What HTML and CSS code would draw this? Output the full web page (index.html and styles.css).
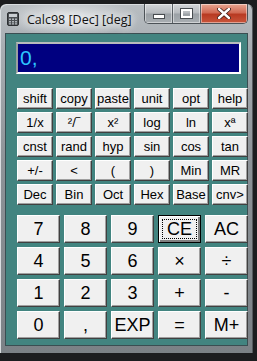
FILE: index.html
```html
<!DOCTYPE html>
<html lang="en">
<head>
  <meta charset="UTF-8">
  <title>Calc98</title>
  <link rel="stylesheet" href="styles.css">
</head>
<body>

<div class="window">
  <div class="titlebar">
    <svg class="app-icon" width="12" height="14" viewBox="0 0 12 14">
      <rect x="0.5" y="0.5" width="11" height="13" rx="1.5" fill="#4b4f53" stroke="#2c2f32"/>
      <rect x="2" y="2" width="8" height="3" fill="#c9ced2"/>
      <g fill="#aeb3b8">
        <rect x="2" y="6.5" width="2" height="1.5"/><rect x="5" y="6.5" width="2" height="1.5"/><rect x="8" y="6.5" width="2" height="1.5"/>
        <rect x="2" y="9" width="2" height="1.5"/><rect x="5" y="9" width="2" height="1.5"/><rect x="8" y="9" width="2" height="1.5"/>
        <rect x="2" y="11.2" width="2" height="1.3"/><rect x="5" y="11.2" width="2" height="1.3"/><rect x="8" y="11.2" width="2" height="1.3"/>
      </g>
    </svg>
    <span class="title">Calc98 [Dec] [deg]</span>
    <div class="controls">
      <span class="ctl min"><i></i></span>
      <span class="ctl max"><i></i></span>
      <span class="ctl close">
        <svg width="14" height="11" viewBox="0 0 14 11"><path d="M2 1 L12 10 M12 1 L2 10" stroke="#3a1a14" stroke-width="4" stroke-linecap="round"/><path d="M2 1 L12 10 M12 1 L2 10" stroke="#fff" stroke-width="2.4" stroke-linecap="round"/></svg>
      </span>
    </div>
  </div>

  <div class="client">
    <div class="display">0,</div>

    <div class="keys small">
      <button>shift</button><button>copy</button><button>paste</button><button>unit</button><button>opt</button><button>help</button>
      <button>1/x</button><button>²/‾</button><button>x²</button><button>log</button><button>ln</button><button>xª</button>
      <button>cnst</button><button>rand</button><button>hyp</button><button>sin</button><button>cos</button><button>tan</button>
      <button>+/-</button><button>&lt;</button><button>(</button><button>)</button><button>Min</button><button>MR</button>
      <button>Dec</button><button>Bin</button><button>Oct</button><button>Hex</button><button>Base</button><button>cnv&gt;</button>
    </div>

    <div class="keys big">
      <button>7</button><button>8</button><button>9</button><button class="focus">CE</button><button>AC</button>
      <button>4</button><button>5</button><button>6</button><button>×</button><button>÷</button>
      <button>1</button><button>2</button><button>3</button><button>+</button><button>-</button>
      <button>0</button><button>,</button><button>EXP</button><button>=</button><button>M+</button>
    </div>
  </div>
</div>

</body>
</html>
```

FILE: styles.css
```css
body { margin: 0; background: #1c1d1f; font-family: "Liberation Sans", Arial, sans-serif; }

.window { margin-top: 4px; width: 253px; height: 349px; box-sizing: border-box; padding: 0 5px 7px 5px;
  border-radius: 6px 6px 0 0;
  background: radial-gradient(ellipse 70px 18px at 70px 14px, #e6e8ea 0%, rgba(230,232,234,0) 100%),
              linear-gradient(180deg, #b9bec2 0%, #a8aeb3 12%, #8d9398 45%, #7b8186 100%);
  box-shadow: inset 1px 1px 0 #d9dde0, inset -1px 0 0 #54595d; }

.titlebar { height: 29px; display: flex; align-items: flex-start; }
.app-icon { margin: 8px 0 0 2px; }
.title { margin: 7px 0 0 8px; font-family: "Open Sans", "Liberation Sans", sans-serif; font-size: 12.5px; color: #111;
  text-shadow: 0 0 6px #eef0f2, 0 0 10px #eef0f2; }
.controls { margin-left: auto; margin-right: 0; display: flex; height: 19px; border: 1px solid #4c5257; border-top: 0;
  border-radius: 0 0 5px 5px; overflow: hidden; }
.ctl { display: flex; align-items: center; justify-content: center; box-shadow: inset 0 0 0 1px rgba(255,255,255,0.45); }
.min, .max { width: 27px; background: linear-gradient(180deg, #d2d5d8 0%, #b6babe 48%, #9aa0a5 52%, #a9aeb2 100%);
  border-right: 1px solid #5a6065; }
.min i { display: block; width: 10px; height: 3px; margin-top: 6px; background: #fff; border: 1px solid #474c50; }
.max i { display: block; width: 7px; height: 5px; border: 2px solid #fff; outline: 1px solid #474c50; }
.close { width: 46px; background: linear-gradient(180deg, #e9a691 0%, #d16b55 45%, #b83a22 55%, #c9563c 100%); }

.client { height: 313px; box-sizing: border-box; background: #428480; border: 1px solid #3a4e52; padding: 8px 0 0 10px; }

.display { width: 225px; height: 32px; box-sizing: border-box; background: #000080; color: #2ec6ff;
  border: 2px solid; border-color: #b8bcbc #fff #fff #9aa0a0; font-size: 21px; line-height: 27px; padding-left: 2px; }

.keys { display: grid; margin-left: 1px; }
.small { margin-top: 14px; grid-template-columns: repeat(6, 36px); grid-auto-rows: 21px; gap: 3px; }
.big { margin-top: 10px; grid-template-columns: repeat(5, 43px); grid-auto-rows: 28px; gap: 4px; }

button { font-family: "Liberation Sans", Arial, sans-serif; color: #000; background: #f0f0f0; padding: 0;
  border: 1px solid; border-color: #fff #404040 #404040 #fff; box-shadow: inset -1px -1px 0 #a0a0a0; position: relative; }
.small button { font-size: 13px; }
.big button { font-size: 18px; }
.big button.focus { border-color: #000; box-shadow: inset 1px 1px 0 #fff, inset -2px -2px 0 #808080; }
.big button.focus::after { content: ""; position: absolute; inset: 3px; border: 1px dotted #000; }
```
